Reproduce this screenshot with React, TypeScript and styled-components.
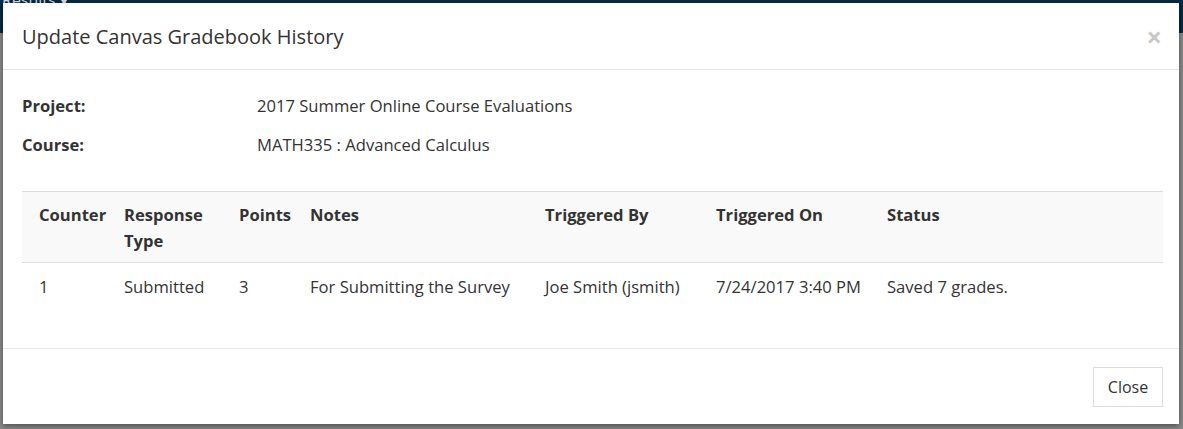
import { FC } from "react";
import styled, { createGlobalStyle } from "styled-components";

const GlobalStyle = createGlobalStyle`
  html, body {
    margin: 0;
    padding: 0;
    background: #8a8a8a;
    font-family: "Open Sans", "Noto Sans", sans-serif;
    color: #333;
  }
`;

const Page = styled.div`
  position: relative;
  width: 1183px;
  height: 429px;
  overflow: hidden;
  background: #8a8a8a;
`;

const NavBar = styled.div`
  height: 33px;
  background: #062a44;
  color: #d7dde3;
  font-size: 16px;
  padding-left: 2px;
  line-height: 0;
`;

const Modal = styled.div`
  position: absolute;
  top: 3px;
  left: 3px;
  width: 1176px;
  height: 421px;
  background: #fff;
  box-shadow: 0 2px 6px rgba(0, 0, 0, 0.45);
  display: flex;
  flex-direction: column;
`;

const Header = styled.div`
  height: 66px;
  border-bottom: 1px solid #e5e5e5;
  padding: 0 19px;
  display: flex;
  align-items: center;
  justify-content: space-between;
`;

const Title = styled.h4`
  margin: 0;
  font-size: 20px;
  font-weight: 400;
  color: #333;
`;

const CloseX = styled.span`
  font-size: 27px;
  font-weight: 700;
  color: #c8c8c8;
  line-height: 1;
  margin-right: -2px;
`;

const Body = styled.div`
  flex: 1;
  padding: 16px 16px 0 19px;
`;

const InfoRow = styled.div`
  display: grid;
  grid-template-columns: 235px 1fr;
  height: 39px;
  align-items: center;
  font-size: 16.6px;
`;

const Label = styled.span`
  font-weight: 700;
`;

const Table = styled.table`
  margin-top: 27px;
  width: 100%;
  border-collapse: collapse;
  table-layout: fixed;
  font-size: 16.6px;
`;

const HeadRow = styled.tr`
  background: #f9f9f9;
  border-top: 1px solid #ddd;
  border-bottom: 1px solid #ddd;
`;

const Th = styled.th`
  text-align: left;
  vertical-align: top;
  font-weight: 700;
  padding: 10px 8px 8px 17px;
  line-height: 26px;
  box-sizing: border-box;
  height: 68px;
`;

const Td = styled.td`
  padding: 12px 8px 8px 17px;
  line-height: 24px;
`;

const Footer = styled.div`
  border-top: 1px solid #e5e5e5;
  height: 75px;
  padding: 0 16px;
  display: flex;
  align-items: center;
  justify-content: flex-end;
`;

const Button = styled.button`
  font-family: inherit;
  font-size: 16px;
  color: #333;
  background: #fff;
  border: 1px solid #dcdcdc;
  width: 70px;
  height: 40px;
`;

const columns = [
  { title: "Counter", width: 85 },
  { title: "Response Type", width: 115 },
  { title: "Points", width: 71 },
  { title: "Notes", width: 235 },
  { title: "Triggered By", width: 171 },
  { title: "Triggered On", width: 171 },
  { title: "Status", width: 293 },
];

const rows = [
  ["1", "Submitted", "3", "For Submitting the Survey", "Joe Smith (jsmith)", "7/24/2017 3:40 PM", "Saved 7 grades."],
];

const App: FC = () => {
  return (
    <Page>
      <GlobalStyle />
      <NavBar>Results ▾</NavBar>
      <Modal>
        <Header>
          <Title>Update Canvas Gradebook History</Title>
          <CloseX>×</CloseX>
        </Header>
        <Body>
          <InfoRow>
            <Label>Project:</Label>
            <span>2017 Summer Online Course Evaluations</span>
          </InfoRow>
          <InfoRow>
            <Label>Course:</Label>
            <span>MATH335 : Advanced Calculus</span>
          </InfoRow>
          <Table>
            <colgroup>
              {columns.map((c) => (
                <col key={c.title} style={{ width: c.width }} />
              ))}
            </colgroup>
            <thead>
              <HeadRow>
                {columns.map((c) => (
                  <Th key={c.title}>{c.title}</Th>
                ))}
              </HeadRow>
            </thead>
            <tbody>
              {rows.map((r, i) => (
                <tr key={i}>
                  {r.map((cell, j) => (
                    <Td key={j}>{cell}</Td>
                  ))}
                </tr>
              ))}
            </tbody>
          </Table>
        </Body>
        <Footer>
          <Button>Close</Button>
        </Footer>
      </Modal>
    </Page>
  );
};

export default App;
